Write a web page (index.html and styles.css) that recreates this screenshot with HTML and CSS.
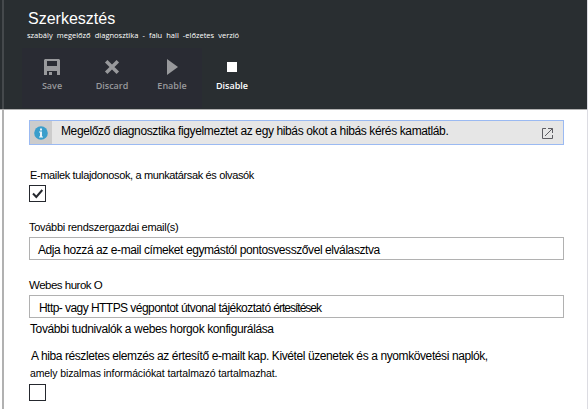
FILE: index.html
```html
<!DOCTYPE html>
<html lang="hu">
<head>
<meta charset="utf-8">
<title>Szerkesztés</title>
<link rel="stylesheet" href="styles.css">
</head>
<body>
<div class="blade">
  <header class="header">
    <h1 class="title">Szerkesztés</h1>
    <p class="subtitle">szabály megelőző diagnosztika - falu hall -előzetes verzió</p>
    <nav class="toolbar">
      <div class="disabled-group">
        <button class="command"><svg viewBox="0 0 16 16" width="16" height="16"><path fill="currentColor" fill-rule="evenodd" d="M1 0h14l1 1v15h-3v-4H3v4H0V1zM3 2v5h10V2zM5 13h3v3H5z"/></svg><span>Save</span></button>
        <button class="command"><svg viewBox="0 0 16 16" width="16" height="16"><path fill="none" stroke="currentColor" stroke-width="3.5" d="M2.2 2.2l11.6 11.6M13.8 2.2L2.2 13.8"/></svg><span>Discard</span></button>
        <button class="command"><svg viewBox="0 0 16 16" width="16" height="16"><path fill="currentColor" d="M3 0l11 8-11 8z"/></svg><span>Enable</span></button>
      </div>
      <button class="command active"><svg viewBox="0 0 16 16" width="16" height="16"><path fill="currentColor" d="M3 3h10v10H3z"/></svg><span>Disable</span></button>
    </nav>
  </header>
  <main class="content">
    <div class="notice">
      <div class="notice-icon"><svg viewBox="0 0 14 14" width="14" height="14"><circle cx="7" cy="7" r="6.8" fill="#3a9ecb"/><path fill="#e8f4fa" d="M6 2.5h2v2H6zM5 5.5h3v5h1v1H5v-1h1v-4H5z"/></svg></div>
      <span class="notice-text">Megelőző diagnosztika figyelmeztet az egy hibás okot a hibás kérés kamatláb.</span>
      <svg class="external" viewBox="0 0 11 11" width="11" height="11"><path fill="none" stroke="#5d5d63" d="M4 .5H.5v10h10V7M6 .5h4.500V5M10.500 .5L3 8"/></svg>
    </div>
    <div class="field owners">
      <span class="label owners-label">E-mailek tulajdonosok, a munkatársak és olvasók</span>
      <div class="checkbox"><svg viewBox="0 0 15 15" width="15" height="15"><path fill="none" stroke="#25282e" stroke-width="2" d="M3 7.500l3.300 3.500L12.300 4"/></svg></div>
    </div>
    <div class="field emails">
      <span class="label emails-label">További rendszergazdai email(s)</span>
      <div class="input"><span class="emails-value">Adja hozzá az e-mail címeket egymástól pontosvesszővel elválasztva</span></div>
    </div>
    <div class="field hooks">
      <span class="label hooks-label">Webes hurok O</span>
      <div class="input"><span class="hooks-value">Http- vagy HTTPS végpontot útvonal tájékoztató <span class="tight">értesítések</span></span></div>
      <span class="label learn">További tudnivalók a webes horgok konfigurálása</span>
    </div>
    <div class="field analysis">
      <span class="label analysis-main">A hiba részletes elemzés az értesítő e-mailt kap. Kivétel üzenetek és a nyomkövetési naplók,</span>
      <span class="label analysis-note">amely bizalmas információkat tartalmazó tartalmazhat.</span>
      <div class="checkbox"></div>
    </div>
  </main>
</div>
</body>
</html>
```

FILE: styles.css
```css
* { box-sizing: border-box; }
body { margin: 0; overflow: hidden; background: #fff; color: #000; font: 12px/16px "Liberation Sans", Arial, sans-serif; }
.blade { width: 588px; height: 409px; border-right: 1px solid #dcdce2; display: flex; flex-direction: column; }
.header { height: 110px; flex: none; padding: 10px 0 0 22px; background: linear-gradient(90deg, #292e31 2px, #45494c 2px, #45494c 4px, #292e31 4px); border-bottom: 1px solid #b1b1b1; color: #fff; }
.title { margin: 0 0 0 6px; font-size: 16px; line-height: 18px; font-weight: 400; white-space: nowrap; }
.subtitle { margin: 2px 0 0 5px; font: 7.500px/10px "Open Sans", sans-serif; word-spacing: 2.150px; white-space: nowrap; }
.toolbar { display: flex; margin-top: 8px; height: 60px; }
.disabled-group { display: flex; background: #292b33; }
.command { width: 60px; padding: 11px 0 0; border: 0; background: none; color: #98999c; display: flex; flex-direction: column; align-items: center; font: 600 9px/12px "Open Sans", sans-serif; }
.command svg { display: block; margin-bottom: 5px; }
.active { color: #fff; }
.content { flex: 1; padding: 10px 23px 0 25px; margin-left: 2px; border-left: 2px solid #b1b1b1; }
.notice { height: 25px; display: flex; border: 1px solid #9bbaf2; background: #e6e6e6; }
.notice-icon { width: 22px; background: #ccc; display: flex; align-items: center; justify-content: center; }
.notice-text { margin: 2px 0 0 9px; white-space: nowrap; flex: 1; letter-spacing: -.38px; }
.external { margin: 7px 10px 0 0; }
.label { display: block; white-space: nowrap; }
.checkbox { width: 17px; height: 17px; border: 1px solid #25282e; }
.checkbox svg { display: block; }
.input { height: 23px; border: 1px solid #b1b1b1; padding: 4px 0 0 8px; white-space: nowrap; }
.owners { margin-top: 22px; height: 52px; }
.owners-label { margin-left: 1px; font-size: 11px; height: 18px; letter-spacing: -.36px; }
.emails { height: 57px; }
.emails-label { font-size: 11px; height: 18px; letter-spacing: -.29px; }
.emails-value { letter-spacing: -.42px; }
.hooks { height: 72px; }
.hooks-label { padding-top: 1px; height: 19px; font-size: 11.500px; letter-spacing: -.5px; }
.hooks-value { margin-left: 1px; letter-spacing: -.55px; }
.tight { letter-spacing: -1px; }
.learn { margin: 3px 0 0 1px; letter-spacing: -.38px; }
.analysis-main { margin-left: 2px; height: 17px; letter-spacing: -.4px; }
.analysis-note { margin: 0 0 3px 1px; font-size: 10.500px; letter-spacing: -.11px; }
```
